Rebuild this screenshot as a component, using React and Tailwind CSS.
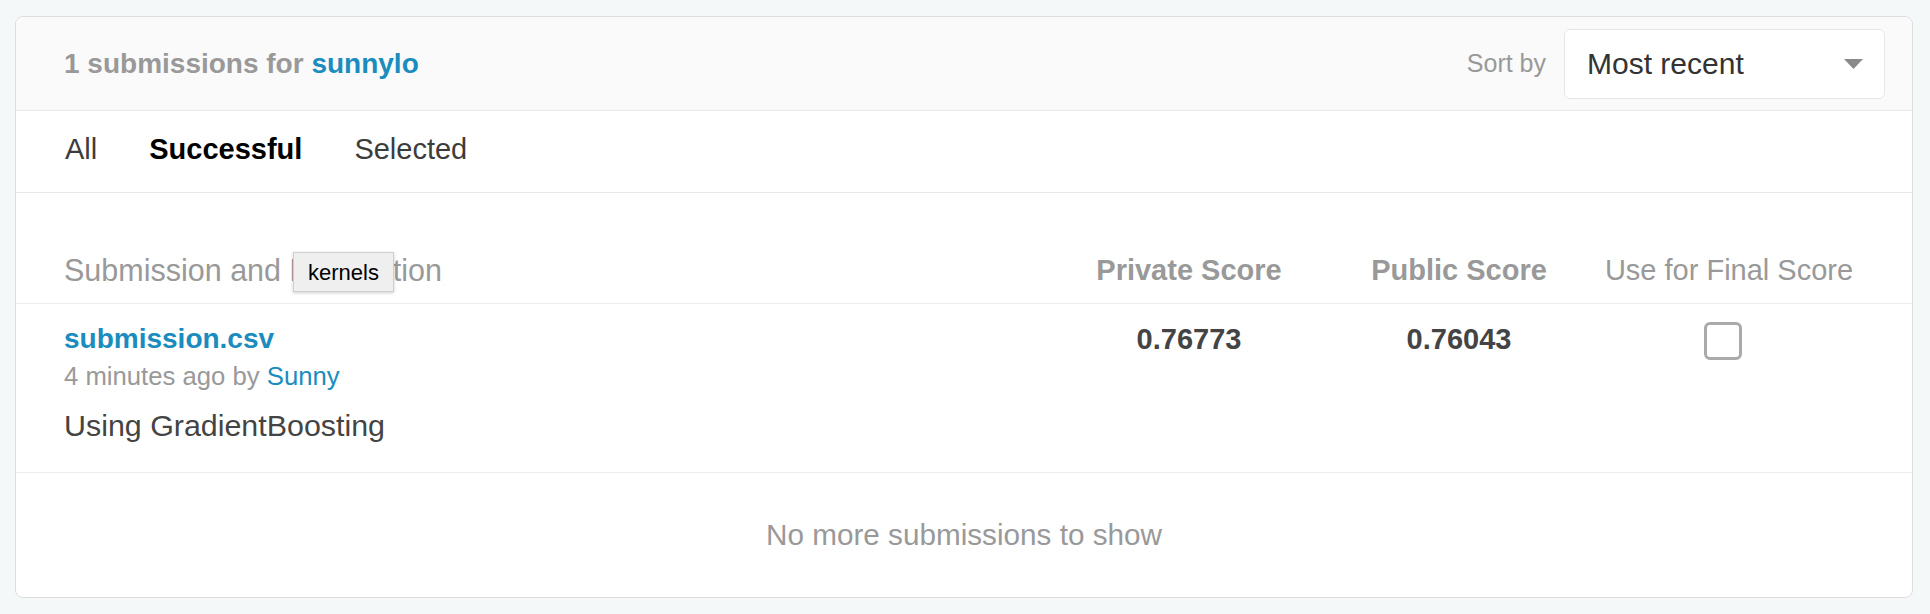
import React from 'react';

const columns = [
  { label: 'Private Score', bold: true },
  { label: 'Public Score', bold: true },
  { label: 'Use for Final Score', bold: false },
];

const submissions = [
  {
    id: 1,
    file: 'submission.csv',
    when: '4 minutes ago',
    author: 'Sunny',
    description: 'Using GradientBoosting',
    privateScore: '0.76773',
    publicScore: '0.76043',
  },
];

const SortSelect = () => (
  <div className="flex items-center gap-[18px]">
    <span className="text-[25px] text-[#999]">Sort by</span>
    <div className="flex h-[70px] w-[321px] items-center justify-between rounded-[6px] border border-[#e6e6e6] bg-white pl-[22px] pr-[21px]">
      <span className="text-[30px] text-[#333]">Most recent</span>
      <svg width="19" height="10" viewBox="0 0 19 10">
        <polygon points="0,0 19,0 9.5,10" fill="#8a8a8a" />
      </svg>
    </div>
  </div>
);

const App = () => {
  return (
    <div className="min-h-screen bg-[#f5f8f9] pb-[16px] pl-[15px] pr-[17px] pt-[16px] font-['Liberation_Sans',Arial,sans-serif]">
      <div className="overflow-hidden rounded-[8px] border border-[#dddddd] bg-white">
        {/* header */}
        <div className="flex h-[94px] items-center justify-between border-b border-[#e8e8e8] bg-[#fafafa] pl-[48px] pr-[27px]">
          <h2 className="text-[28px] font-bold text-[#999]">
            1 submissions for <span className="text-[#1a8cbe]">sunnylo</span>
          </h2>
          <SortSelect />
        </div>

        {/* tabs */}
        <div className="flex h-[82px] items-center gap-[52px] border-b border-[#e8e8e8] pb-[3px] pl-[49px] text-[29px]">
          <span className="text-[#3c3c3c]">All</span>
          <span className="font-bold text-black">Successful</span>
          <span className="text-[#3c3c3c]">Selected</span>
        </div>

        {/* column titles */}
        <div className="relative flex h-[111px] items-end border-b border-[#ececec] px-[48px] pb-[15px] text-[29px] leading-[35px] text-[#999]">
          <div className="flex-1 text-[30.5px]">Submission and Description</div>
          {columns.map((col) => (
            <div key={col.label} className={`w-[270px] text-center ${col.bold ? 'font-bold' : ''}`}>
              {col.label}
            </div>
          ))}
          <div className="absolute left-[277px] top-[59px] flex h-[40px] w-[101px] items-center justify-center border border-[#cfcfcf] bg-[#efefef] text-[22px] text-black shadow-[0_1px_3px_rgba(0,0,0,0.2)]">
            kernels
          </div>
        </div>

        {/* rows */}
        {submissions.map((s) => (
          <div key={s.id} className="flex h-[169px] border-b border-[#ececec] px-[48px] pt-[18px]">
            <div className="flex-1">
              <div className="text-[28px] font-bold leading-[34px] text-[#1a8cbe]">{s.file}</div>
              <div className="mt-[3px] text-[25.7px] leading-[34px] text-[#999]">
                {s.when} by <span className="text-[#1a8cbe]">{s.author}</span>
              </div>
              <div className="mt-[14px] text-[30.4px] leading-[36px] text-[#444]">{s.description}</div>
            </div>
            <div className="w-[270px] text-center text-[29px] font-bold leading-[34px] text-[#444]">{s.privateScore}</div>
            <div className="w-[270px] text-center text-[29px] font-bold leading-[34px] text-[#444]">{s.publicScore}</div>
            <div className="flex w-[270px] justify-center pr-[12px]">
              <div className="h-[38px] w-[38px] rounded-[6px] border-[3px] border-[#aaaaaa] bg-white"></div>
            </div>
          </div>
        ))}

        {/* footer */}
        <div className="flex h-[124px] items-center justify-center text-[29.7px] text-[#999]">
          No more submissions to show
        </div>
      </div>
    </div>
  );
};

export default App;
